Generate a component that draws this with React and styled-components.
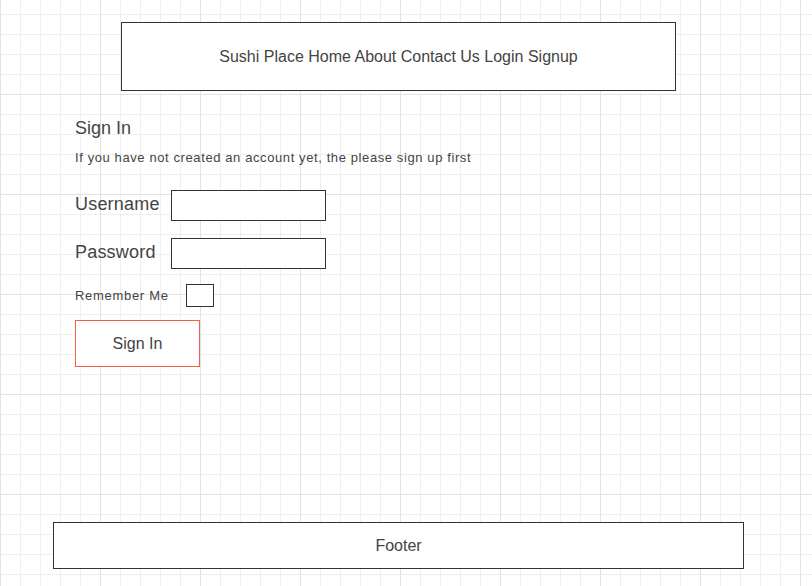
import React from "react";
import styled, { createGlobalStyle } from "styled-components";

const GlobalStyle = createGlobalStyle`
  html, body {
    margin: 0;
    padding: 0;
  }
  body {
    font-family: "Liberation Sans", Arial, sans-serif;
    color: #444;
    background-color: #ffffff;
    background-image:
      linear-gradient(to right, #e2e2e2 1px, transparent 1px),
      linear-gradient(to bottom, #e2e2e2 1px, transparent 1px),
      linear-gradient(to right, #efefef 1px, transparent 1px),
      linear-gradient(to bottom, #efefef 1px, transparent 1px);
    background-size: 100px 100px, 100px 100px, 20px 20px, 20px 20px;
    background-position: 0 -6px;
  }
`;

const Page = styled.div`
  min-height: 586px;
  display: flex;
  flex-direction: column;
  box-sizing: border-box;
  padding-top: 22px;
  padding-bottom: 17px;
`;

const Box = styled.div`
  box-sizing: border-box;
  border: 1px solid #333;
  background: #fff;
  display: flex;
  align-items: center;
  justify-content: center;
  font-size: 16px;
  color: #444;
`;

const Header = styled(Box)`
  width: 555px;
  height: 69px;
  margin-left: 121px;
`;

const Footer = styled(Box)`
  width: 691px;
  height: 47px;
  margin-left: 53px;
  margin-top: auto;
`;

const Form = styled.form`
  display: flex;
  flex-direction: column;
  align-items: flex-start;
  padding-left: 75px;
  margin-top: 27px;
`;

const Title = styled.h2`
  margin: 0;
  font-size: 18px;
  line-height: 20px;
  font-weight: normal;
`;

const Note = styled.p`
  margin: 12px 0 0;
  font-size: 13px;
  line-height: 16px;
  letter-spacing: 0.6px;
`;

const Row = styled.div`
  display: flex;
  align-items: center;
  margin-top: ${(p) => p.$gap}px;
`;

const Label = styled.label`
  box-sizing: border-box;
  width: ${(p) => p.$width}px;
  font-size: ${(p) => p.$size}px;
  letter-spacing: ${(p) => (p.$size < 16 ? "0.7px" : "0.2px")};
  line-height: 20px;
  padding-bottom: ${(p) => (p.$size < 16 ? 0 : 4)}px;
`;

const Input = styled.input`
  box-sizing: border-box;
  width: 155px;
  height: 31px;
  margin: 0;
  border: 1px solid #333;
  border-radius: 0;
  background: #fff;
  outline: none;
`;

const Check = styled.span`
  box-sizing: border-box;
  display: block;
  width: 28px;
  height: 23px;
  border: 1px solid #333;
  background: #fff;
`;

const Button = styled.button`
  appearance: none;
  box-sizing: border-box;
  width: 125px;
  height: 47px;
  margin-top: 13px;
  border: 1px solid #f2603f;
  border-radius: 0;
  background: #fff;
  font-family: inherit;
  font-size: 16px;
  color: #444;
  padding: 0;
`;

export default function App() {
  return (
    <Page>
      <GlobalStyle />
      <Header>Sushi Place Home About Contact Us Login Signup</Header>
      <Form onSubmit={(e) => e.preventDefault()}>
        <Title>Sign In</Title>
        <Note>If you have not created an account yet, the please sign up first</Note>
        <Row $gap={24}>
          <Label $width={96} $size={18}>Username</Label>
          <Input type="text" />
        </Row>
        <Row $gap={17}>
          <Label $width={96} $size={18}>Password</Label>
          <Input type="password" />
        </Row>
        <Row $gap={15}>
          <Label $width={111} $size={13}>Remember Me</Label>
          <Check />
        </Row>
        <Button type="submit">Sign In</Button>
      </Form>
      <Footer>Footer</Footer>
    </Page>
  );
}
